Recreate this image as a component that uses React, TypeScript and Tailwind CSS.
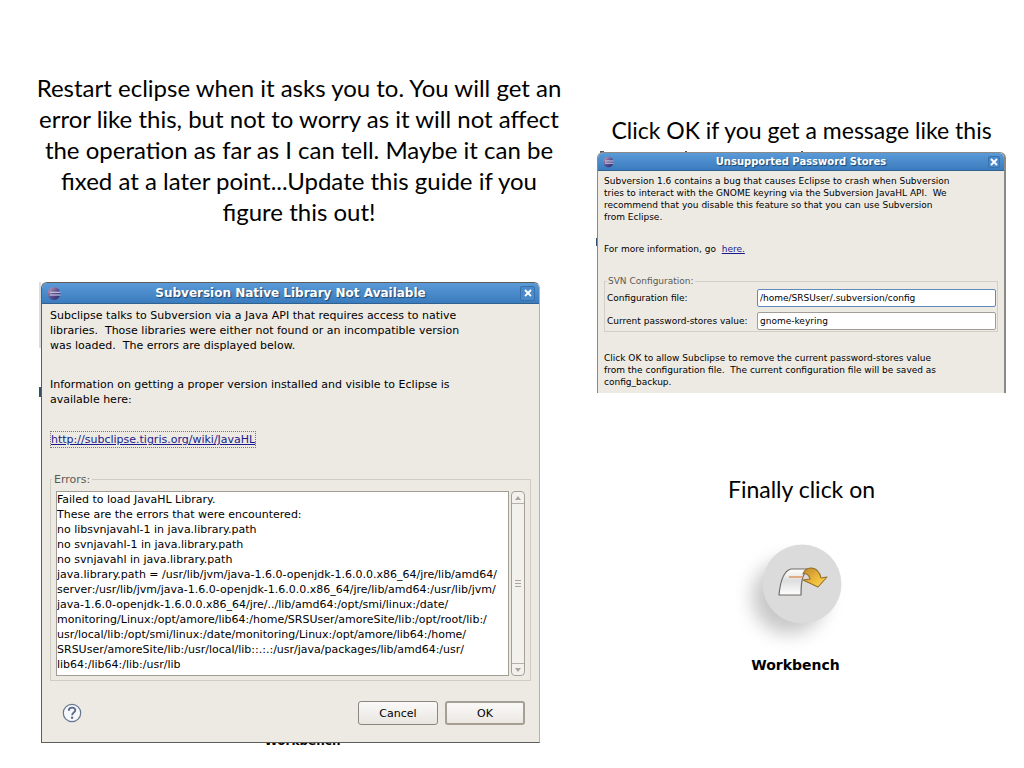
import React from 'react';

const ERROR_LOG = `Failed to load JavaHL Library.
These are the errors that were encountered:
no libsvnjavahl-1 in java.library.path
no svnjavahl-1 in java.library.path
no svnjavahl in java.library.path
java.library.path = /usr/lib/jvm/java-1.6.0-openjdk-1.6.0.0.x86_64/jre/lib/amd64/
server:/usr/lib/jvm/java-1.6.0-openjdk-1.6.0.0.x86_64/jre/lib/amd64:/usr/lib/jvm/
java-1.6.0-openjdk-1.6.0.0.x86_64/jre/../lib/amd64:/opt/smi/linux:/date/
monitoring/Linux:/opt/amore/lib64:/home/SRSUser/amoreSite/lib:/opt/root/lib:/
usr/local/lib:/opt/smi/linux:/date/monitoring/Linux:/opt/amore/lib64:/home/
SRSUser/amoreSite/lib:/usr/local/lib::.:.:/usr/java/packages/lib/amd64:/usr/
lib64:/lib64:/lib:/usr/lib`;

export default function App() {
  return (
    <main className="grid min-h-screen grid-cols-[518fr_409fr] gap-x-[39px] bg-white pr-[18px] pl-10 font-['Lato',sans-serif] text-black">
      {/* --- Left: restart + native library error --- */}
      <section className="min-w-0 pt-[72px]">
        <h1 className="flex justify-center text-center text-2xl leading-[31px] whitespace-nowrap">
          <span>
            Restart eclipse when it asks you to. You will get an<br />
            error like this, but not to worry as it will not affect<br />
            the operation as far as I can tell. Maybe it can be<br />
            fixed at a later point...Update this guide if you<br />
            figure this out!
          </span>
        </h1>
        <div className="relative mt-[55px] mr-[18px]">
          {/* edges of the window underneath */}
          <i className="absolute top-0 -left-px h-[66px] w-0.5 bg-[#dddddd]" />
          <i className="absolute top-[105px] -left-px h-2.5 w-0.5 bg-[#35506e]" />
          <div className="pl-px">
            <NativeLibraryDialog />
            <Sliver />
          </div>
        </div>
      </section>

      {/* --- Right: password stores + workbench --- */}
      <section className="min-w-0 pt-[115px]">
        <h2 className="h-[37px] text-center text-[23px] leading-[31px] whitespace-nowrap">
          Click OK if you get a message like this
        </h2>
        <div className="relative">
          <i className="absolute -top-px left-[3px] h-0.5 w-1 bg-[#555555]" />
          <i className="absolute -top-px left-[88px] h-0.5 w-0.5 bg-[#555555]" />
          <i className="absolute -top-px left-[204px] h-0.5 w-0.5 bg-[#555555]" />
          <i className="absolute top-[86px] -left-px h-2 w-0.5 bg-[#35506e]" />
          <PasswordStoresDialog />
        </div>
        <div className="mt-[81px] flex flex-col items-center">
          <h2 className="text-[23px] leading-[31px]">Finally click on</h2>
          <a href="#workbench" className="mt-[22px] flex flex-col items-center pr-3">
            <WorkbenchIcon />
            <span className="font-['DejaVu_Sans',sans-serif] text-sm leading-4 font-bold">Workbench</span>
          </a>
        </div>
      </section>
    </main>
  );
}

// --- Dialogs ---
function NativeLibraryDialog() {
  return (
    <div
      role="dialog"
      aria-label="Subversion Native Library Not Available"
      className="relative rounded-t-md border border-[#5d5d5a] border-r-[#b5b2ab] bg-[#edeae4] font-['DejaVu_Sans',sans-serif] text-[11px] leading-[15px]"
    >
      <TitleBar title="Subversion Native Library Not Available" />
      <div className="px-2 pt-1 pb-[17px]">
        <p className="whitespace-pre">
          {'Subclipse talks to Subversion via a Java API that requires access to native\n'}
          {'libraries.  Those libraries were either not found or an incompatible version\n'}
          {'was loaded.  The errors are displayed below.'}
        </p>
        <p className="mt-6 whitespace-pre">
          {'Information on getting a proper version installed and visible to Eclipse is\navailable here:'}
        </p>
        <p className="mt-6">
          <a
            href="http://subclipse.tigris.org/wiki/JavaHL"
            className="inline-block border border-dotted border-[#77756f] text-[#1a1a8c] underline"
          >
            http://subclipse.tigris.org/wiki/JavaHL
          </a>
        </p>

        <fieldset className="mt-6 min-w-0 border border-[#cfccc4] px-[5px] pb-1">
          <legend className="-ml-1 px-0.5 text-[#5c5a55]">
            <label htmlFor="errors">Errors:</label>
          </legend>
          <div className="mt-1 flex h-[185px] gap-0.5">
            <textarea
              id="errors"
              readOnly
              wrap="off"
              defaultValue={ERROR_LOG}
              className="min-w-0 flex-1 resize-none overflow-hidden border border-[#a19d94] bg-white outline-none"
            />
            <div className="flex w-[14px] flex-col rounded-sm border border-[#a5a199] bg-[#f3f1ed]">
              <button aria-label="Scroll up" className="flex h-3 items-center justify-center border-b border-[#b5b1a9]">
                <Arrow up />
              </button>
              <div className="flex flex-1 flex-col items-center justify-center gap-0.5">
                <i className="h-px w-1.5 bg-[#aaa69e]" />
                <i className="h-px w-1.5 bg-[#aaa69e]" />
                <i className="h-px w-1.5 bg-[#aaa69e]" />
              </div>
              <button aria-label="Scroll down" className="flex h-3 items-center justify-center border-t border-[#b5b1a9]">
                <Arrow />
              </button>
            </div>
          </div>
        </fieldset>

        <div className="mt-5 flex items-center gap-[7px] pr-[6px] pl-3">
          <button aria-label="Help" className="mr-auto">
            <svg width="20" height="20" viewBox="0 0 20 20" fill="none">
              <circle cx="10" cy="10" r="8.7" fill="#f7f8fb" stroke="#657591" strokeWidth="1.2" />
              <path d="M6.8 7.7c0-4 6.5-4 6.5-.5 0 2.3-3.2 2.3-3.2 5" stroke="#586b8b" strokeWidth="1.9" />
              <circle cx="10.1" cy="14.8" r="1.2" fill="#586b8b" />
            </svg>
          </button>
          <button className="h-6 w-20 rounded-[3px] border border-[#8b8780] bg-linear-to-b from-[#faf9f8] to-[#e9e6e1]">
            Cancel
          </button>
          <button className="h-6 w-20 rounded-[3px] border-2 border-[#a69f96] bg-linear-to-b from-[#faf9f8] to-[#ece7e2]">
            OK
          </button>
        </div>
      </div>
    </div>
  );
}

function PasswordStoresDialog() {
  return (
    <div
      role="dialog"
      aria-label="Unsupported Password Stores"
      className="relative rounded-t-md border border-r-2 border-b-0 border-[#8c8a86] bg-[#edeae4] font-['DejaVu_Sans',sans-serif] text-[9px] leading-3"
    >
      <TitleBar title="Unsupported Password Stores" small />
      <div className="px-1.5 pt-1 pb-[5px]">
        <p className="whitespace-pre">
          {'Subversion 1.6 contains a bug that causes Eclipse to crash when Subversion\n'}
          {'tries to interact with the GNOME keyring via the Subversion JavaHL API.  We\n'}
          {'recommend that you disable this feature so that you can use Subversion\n'}
          {'from Eclipse.'}
        </p>
        <p className="mt-5 whitespace-pre">
          {'For more information, go  '}
          <a href="#info" className="text-[#1a1a8c] underline">here.</a>
        </p>
        <fieldset className="mt-5 min-w-0 border border-[#d2cfc8] pb-px">
          <legend className="ml-0.5 px-px text-[#5c5a55]">SVN Configuration:</legend>
          <div className="grid grid-cols-[150px_1fr] items-center gap-y-[5px] pt-0.5 pr-px pl-0.5">
            <label htmlFor="config-file">Configuration file:</label>
            <input
              id="config-file"
              defaultValue="/home/SRSUser/.subversion/config"
              className="h-[18px] min-w-0 rounded-xs border border-[#5f8abb] bg-white px-0.5 outline-none"
            />
            <label htmlFor="stores" className="whitespace-nowrap">Current password-stores value:</label>
            <input
              id="stores"
              defaultValue="gnome-keyring"
              className="h-[18px] min-w-0 rounded-xs border border-[#a29e97] bg-white px-0.5 outline-none"
            />
          </div>
        </fieldset>
        <p className="mt-5 whitespace-pre">
          {'Click OK to allow Subclipse to remove the current password-stores value\n'}
          {'from the configuration file.  The current configuration file will be saved as\n'}
          {'config_backup.'}
        </p>
      </div>
    </div>
  );
}

// --- Window pieces ---
function TitleBar({ title, small }: { title: string; small?: boolean }) {
  return (
    <div
      className={
        'flex items-center rounded-t-[5px] border-b border-[#31618f] bg-linear-to-b from-[#5b9ad8] to-[#3a7cbe] px-1 font-bold text-white ' +
        (small ? 'h-[18px] text-[10px]' : 'h-[21px] text-xs')
      }
    >
      <EclipseIcon size={small ? 12 : 15} />
      <span className="flex-1 text-center [text-shadow:1px_1px_1px_#1d456d]">{title}</span>
      <button
        aria-label="Close"
        className={
          'flex items-center justify-center rounded-xs border border-[#3871aa] bg-[#4a8aca] ' +
          (small ? 'size-3' : 'size-[15px]')
        }
      >
        <svg width="8" height="8" viewBox="0 0 8 8" stroke="#fff" strokeWidth="1.8">
          <path d="M1 1l6 6M7 1L1 7" />
        </svg>
      </button>
    </div>
  );
}

function EclipseIcon({ size }: { size: number }) {
  return (
    <svg width={size} height={size} viewBox="0 0 14 14">
      <defs>
        <linearGradient id="orb" x1="0" y1="0" x2="1" y2="1">
          <stop offset="0" stopColor="#d3a4b8" />
          <stop offset=".5" stopColor="#5b5294" />
          <stop offset="1" stopColor="#2b2765" />
        </linearGradient>
      </defs>
      <circle cx="7.5" cy="7" r="6" fill="url(#orb)" />
      <path d="M3.5 5.8h10M3.5 8.4h10" stroke="#dcdaf0" strokeWidth="1.1" />
    </svg>
  );
}

const Arrow = ({ up }: { up?: boolean }) => (
  <svg width="6" height="4" viewBox="0 0 6 4" fill="#aaa69e">
    <path d={up ? 'M0 4l3-4 3 4z' : 'M0 0l3 4 3-4z'} />
  </svg>
);

// Lower edge of the caption that sticks out under the error dialog
function Sliver() {
  return (
    <div aria-hidden className="flex h-1 items-end justify-center overflow-hidden pl-6">
      <span className="font-['DejaVu_Sans',sans-serif] text-xs leading-3 font-bold">Workbench</span>
    </div>
  );
}

function WorkbenchIcon() {
  return (
    <svg width="120" height="130" viewBox="0 0 120 130">
      <defs>
        <filter id="soft" x="-40%" y="-40%" width="180%" height="180%">
          <feGaussianBlur stdDeviation="9" />
        </filter>
        <linearGradient id="page" x1="0" y1="0" x2="0" y2="1">
          <stop offset="0" stopColor="#ffffff" />
          <stop offset=".45" stopColor="#dedede" />
          <stop offset="1" stopColor="#ffffff" />
        </linearGradient>
        <linearGradient id="gold" x1="0" y1="0" x2="1" y2="1">
          <stop offset="0" stopColor="#c08a2c" />
          <stop offset=".6" stopColor="#f1bd3d" />
          <stop offset="1" stopColor="#ffdf55" />
        </linearGradient>
      </defs>
      <circle cx="53" cy="70" r="37" fill="#b0b0b0" opacity=".7" filter="url(#soft)" />
      <circle cx="66" cy="57" r="39.5" fill="#dbdbdb" />
      <path
        d="M43 68c1-11 4-24 12-26h21c-9 1-11 10-11 26z"
        fill="url(#page)"
        stroke="#716b66"
        strokeWidth="1.2"
      />
      <path d="M53 50h14" stroke="#e09c6a" strokeWidth="1.6" />
      <path
        d="M67 47c3-8 15-9 18 4l6-1-9 10-15-7 7-1c-1-4-3-6-7-5z"
        fill="url(#gold)"
        stroke="#94702c"
        strokeWidth="1.1"
        strokeLinejoin="round"
      />
    </svg>
  );
}
